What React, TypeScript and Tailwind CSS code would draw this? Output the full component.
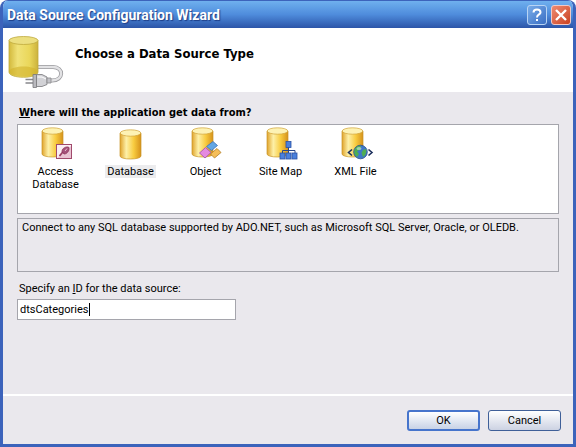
import { useState } from 'react';
import type { ReactNode } from 'react';

const Cylinder = ({ top = 4 }: { top?: number }) => (
  <>
    <path
      d={`M4 ${top} V${top + 23} C4 ${top + 27} 25 ${top + 27} 25 ${top + 23} V${top} Z`}
      fill="url(#gold)"
      stroke="#c9962a"
      strokeWidth="0.7"
    />
    <ellipse cx="14.5" cy={top} rx="10.3" ry="3.2" fill="#fdf2b4" stroke="#d0a238" strokeWidth="0.7" />
  </>
);

const sources: { id: string; name: string; description: string; top?: number; badge?: ReactNode }[] = [
  {
    id: 'access',
    name: 'Access Database',
    description: 'Connect to a Microsoft Access database.',
    badge: (
      <>
        <rect x="18.5" y="17.5" width="15" height="14" fill="#fbeef4" stroke="#a04a6c" />
        <path d="M19.5 31 L33 19 V31 H19.5 Z" fill="#e9c3d3" />
        <path d="M21.5 29 L26 23.5" stroke="#983e62" strokeWidth="1.8" />
        <path d="M24 24.5 C24 21 28 19.5 30.5 20 C32 22 30 27 26 27 Z" fill="#a4517a" stroke="#8c3459" strokeWidth="0.8" />
        <path d="M27 24 L29 21.5" stroke="#e9c3d3" />
      </>
    ),
  },
  {
    id: 'database',
    name: 'Database',
    description: 'Connect to any SQL database supported by ADO.NET, such as Microsoft SQL Server, Oracle, or OLEDB.',
    top: 6,
  },
  {
    id: 'object',
    name: 'Object',
    description: 'Connect to a middle-tier business object.',
    badge: (
      <>
        <path d="M18.5 19.5 L25 14.5 L29.5 18.5 L23.5 23.5 Z" fill="#62a6e4" stroke="#3d70b8" strokeWidth="0.8" />
        <path d="M11.5 26 L17.5 20.5 L23 25.5 L17 31 Z" fill="#e58ae0" stroke="#9c4cac" strokeWidth="0.8" />
        <path d="M22.5 27 L29 21.5 L33 25.5 L26.5 31 Z" fill="#f5be58" stroke="#b07c28" strokeWidth="0.8" />
      </>
    ),
  },
  {
    id: 'sitemap',
    name: 'Site Map',
    description: 'Connect to the site navigation tree for this application.',
    badge: (
      <>
        <path d="M25.5 20 V27 M19.5 27 V23.5 H32 V27" fill="none" stroke="#27468a" />
        <rect x="23" y="14.5" width="5" height="6" fill="#4a80dc" stroke="#2c52a4" strokeWidth="0.8" />
        <rect x="17" y="26" width="5" height="6" fill="#4a80dc" stroke="#2c52a4" strokeWidth="0.8" />
        <rect x="23" y="26" width="5" height="6" fill="#4a80dc" stroke="#2c52a4" strokeWidth="0.8" />
        <rect x="29" y="26" width="5" height="6" fill="#4a80dc" stroke="#2c52a4" strokeWidth="0.8" />
      </>
    ),
  },
  {
    id: 'xml',
    name: 'XML File',
    description: 'Connect to an XML file.',
    badge: (
      <>
        <path d="M14 22.5 L10.5 25.5 L14 28.5 M30.5 22.5 L34 25.5 L30.5 28.5" fill="none" stroke="#1c2f5c" strokeWidth="1.6" />
        <circle cx="22.5" cy="25" r="6.8" fill="#3f78c8" stroke="#274f8c" strokeWidth="0.8" />
        <path d="M18 20.5 C20 18.5 22 18.5 23 19.5 L22 23 L19 24 L21 27 L19 30 C15 27 16 23 18 20.5 Z M25 23 L28 22 C29 26 27 29 25 30 L23.5 26 Z" fill="#4fae52" />
        <ellipse cx="21" cy="21.5" rx="2.5" ry="1.5" fill="#cfe8ee" opacity="0.6" />
      </>
    ),
  },
];

const WizardIcon = () => (
  <svg width="60" height="56" viewBox="6 0 60 56" aria-hidden="true">
    <path d="M34 31 H52 C63 31 63 44.5 51 44.5 H46" fill="none" stroke="#9a9a9e" strokeWidth="4" />
    <path d="M34 31 H52 C63 31 63 44.5 51 44.5 H46" fill="none" stroke="#e2e2e4" strokeWidth="2.4" />
    <path d="M8 4.5 V36 C8 43 37 43 37 36 V4.5 Z" fill="url(#brass)" stroke="#bfa93c" strokeWidth="0.8" />
    <path d="M8.5 35 C10 29 35 29 36.5 35 V36 C35 42 10 42 8.5 36 Z" fill="#d2b22c" opacity="0.6" />
    <ellipse cx="22.5" cy="4.5" rx="14.5" ry="4" fill="#ecdf80" stroke="#bfa93c" strokeWidth="0.8" />
    <path d="M24.5 43.5 H33 M24.5 47 H33" stroke="#88888c" strokeWidth="1.6" />
    <path d="M32 38.5 H35.5 V51.5 H32 Z" fill="#b9b9be" stroke="#77777b" strokeWidth="0.8" />
    <path d="M35.5 38.5 H41 L46 41 V48.5 L41 50.5 H35.5 Z" fill="#d2d2d6" stroke="#77777b" strokeWidth="0.8" />
    <path d="M46 42 H50 V47 H46 Z" fill="#c3c3c8" stroke="#88888c" strokeWidth="0.8" />
    <path d="M36.5 41 H41 L45 43" fill="none" stroke="#ffffff" />
  </svg>
);

const App = () => {
  const [selected, setSelected] = useState('database');
  const [sourceId, setSourceId] = useState('dtsCategories');
  const current = sources.find((source) => source.id === selected);

  return (
    <div
      className="flex min-h-screen flex-col overflow-hidden rounded-t-lg border-x-3 border-b-3 border-[#3c63bb] bg-[#eae8ed] text-[11px] leading-[13px] text-black"
      style={{ fontFamily: "Tahoma, Roboto, 'DejaVu Sans', sans-serif" }}
    >
      <svg className="absolute size-0" aria-hidden="true">
        <defs>
          <linearGradient id="gold">
            <stop offset="0" stopColor="#e0a42c" />
            <stop offset="0.3" stopColor="#fdf0a8" />
            <stop offset="0.65" stopColor="#f8cc40" />
            <stop offset="1" stopColor="#d6921a" />
          </linearGradient>
          <linearGradient id="brass">
            <stop offset="0" stopColor="#d3b93c" />
            <stop offset="0.3" stopColor="#f0e278" />
            <stop offset="0.7" stopColor="#ead75a" />
            <stop offset="1" stopColor="#ccb23c" />
          </linearGradient>
        </defs>
      </svg>

      <header className="flex h-7 items-center gap-1 border-t border-[#3c63bb] bg-linear-to-b from-[#6fb0ee] via-[#4f8cdc] to-[#2c55a8] pr-0.5 pl-1">
        <h1 className="grow font-[Roboto,sans-serif] text-[14px] leading-4 font-bold text-white [text-shadow:1px_1px_1px_#1c3c86]">
          Data Source Configuration Wizard
        </h1>
        <button type="button" aria-label="Help" className="flex size-5 items-center justify-center rounded-[3px] border border-[#b8d4f4] bg-linear-to-br from-[#79ace8] to-[#3b6fc4]">
          <svg width="14" height="14" viewBox="0 0 14 14" fill="none" stroke="#fff" strokeWidth="2">
            <path d="M3.5 4.5 C3.5 0.5 10.5 0.5 10.5 4.5 C10.5 6.5 7 6.5 7 9.5 M7 11 V13" />
          </svg>
        </button>
        <button type="button" aria-label="Close" className="flex size-5 items-center justify-center rounded-[3px] border border-[#f0c8c4] bg-linear-to-br from-[#ee8a70] to-[#c9401c]">
          <svg width="14" height="14" viewBox="0 0 14 14" stroke="#fff" strokeWidth="2.4">
            <path d="M2 2 L12 12 M12 2 L2 12" />
          </svg>
        </button>
      </header>

      <div className="flex h-16 gap-2 bg-white pt-2 pl-1">
        <WizardIcon />
        <h2 className="pt-2.5 font-['DejaVu_Sans_Condensed','DejaVu_Sans',sans-serif] text-[13px] leading-4 font-bold">Choose a Data Source Type</h2>
      </div>

      <form className="flex grow flex-col" onSubmit={(e) => e.preventDefault()}>
        <div className="flex grow flex-col px-3.5 pt-3.5 pb-4">
          <p id="source-label" className="mb-1 ml-0.5 font-['DejaVu_Sans_Condensed','DejaVu_Sans',sans-serif] leading-[14px] font-bold">
            <u>W</u>here will the application get data from?
          </p>
          <div role="group" aria-labelledby="source-label" className="mb-1 flex min-h-[90px] flex-wrap content-start items-start border border-[#a5a5ac] bg-white pt-0.5">
            {sources.map((source) => (
              <button
                key={source.id}
                type="button"
                aria-pressed={source.id === selected}
                onClick={() => setSelected(source.id)}
                className="flex w-[75px] flex-col items-center gap-1"
              >
                <svg width="36" height="34" viewBox={source.badge ? '0 0 36 34' : '-3 0 36 34'} aria-hidden="true">
                  <Cylinder top={source.top} />
                  {source.badge}
                </svg>
                <span className={source.id === selected ? 'bg-[#ececee] px-0.5' : 'px-2'}>{source.name}</span>
              </button>
            ))}
          </div>
          <p className="mb-2.5 min-h-[54px] border border-[#a5a5ac] px-1 pt-0.5">{current?.description}</p>
          <label htmlFor="source-id" className="mb-1 ml-0.5">
            Specify an <u>I</u>D for the data source:
          </label>
          <div className="relative w-[219px]">
            <input
              id="source-id"
              type="text"
              value={sourceId}
              onChange={(e) => setSourceId(e.target.value)}
              className="peer h-[21px] w-full border border-[#a5a5ac] bg-white px-0.5 caret-black outline-none"
            />
            <span aria-hidden="true" className="absolute top-1 left-[72px] h-[13px] w-px bg-black peer-focus:hidden" />
          </div>
        </div>
        <footer className="flex justify-end gap-2 border-t-2 border-white px-3 pt-3.5 pb-[13px]">
          <button type="submit" className="h-[21px] w-[73px] rounded-[3px] border-2 border-[#4674cc] bg-linear-to-b from-white to-[#c8d2e6]">
            OK
          </button>
          <button type="button" className="h-[21px] w-[73px] rounded-[3px] border border-[#3f5f98] bg-linear-to-b from-white to-[#ccd2e2]">
            Cancel
          </button>
        </footer>
      </form>
    </div>
  );
};

export default App;
